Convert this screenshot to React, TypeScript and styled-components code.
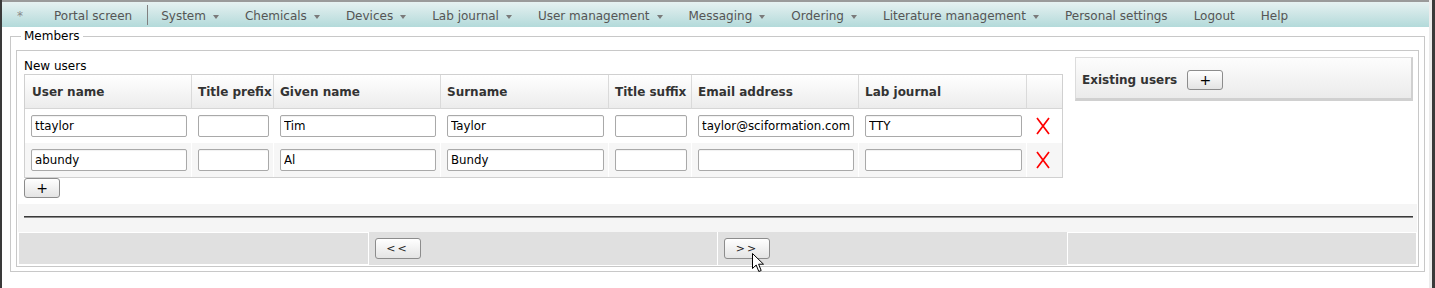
import React from "react";
import styled, { createGlobalStyle } from "styled-components";

const GlobalStyle = createGlobalStyle`
  body {
    margin: 0;
    background: #ffffff;
    font-family: "DejaVu Sans", Verdana, sans-serif;
    font-size: 12px;
    color: #000000;
  }
`;

interface NavEntry {
  label: string;
  menu?: boolean;
}

const navEntries: NavEntry[] = [
  { label: "System", menu: true },
  { label: "Chemicals", menu: true },
  { label: "Devices", menu: true },
  { label: "Lab journal", menu: true },
  { label: "User management", menu: true },
  { label: "Messaging", menu: true },
  { label: "Ordering", menu: true },
  { label: "Literature management", menu: true },
  { label: "Personal settings" },
  { label: "Logout" },
  { label: "Help" },
];

interface UserRow {
  user: string;
  prefix: string;
  given: string;
  surname: string;
  suffix: string;
  email: string;
  lab: string;
}

interface Column {
  title: string;
  width: number;
  field: keyof UserRow;
}

const columns: Column[] = [
  { title: "User name", width: 167, field: "user" },
  { title: "Title prefix", width: 82, field: "prefix" },
  { title: "Given name", width: 167, field: "given" },
  { title: "Surname", width: 168, field: "surname" },
  { title: "Title suffix", width: 83, field: "suffix" },
  { title: "Email address", width: 167, field: "email" },
  { title: "Lab journal", width: 168, field: "lab" },
];

const newUsers: UserRow[] = [
  {
    user: "ttaylor",
    prefix: "",
    given: "Tim",
    surname: "Taylor",
    suffix: "",
    email: "taylor@sciformation.com",
    lab: "TTY",
  },
  {
    user: "abundy",
    prefix: "",
    given: "Al",
    surname: "Bundy",
    suffix: "",
    email: "",
    lab: "",
  },
];

export default function App() {
  return (
    <Frame>
      <GlobalStyle />
      <Screen>
        <NavBar>
          <StarItem>*</StarItem>
          <NavItem $first>Portal screen</NavItem>
          <NavSeparator />
          {navEntries.map((entry) => (
            <NavItem key={entry.label}>
              {entry.label}
              {entry.menu && <MenuArrow />}
            </NavItem>
          ))}
        </NavBar>

        <Main>
          <Members>
            <MembersLegend>Members</MembersLegend>
            <Panel>
              <TopArea>
                <NewUsers>
                  <SectionLabel>New users</SectionLabel>
                  <UserTable>
                    <thead>
                      <tr>
                        {columns.map((col) => (
                          <HeadCell key={col.title} $w={col.width}>
                            {col.title}
                          </HeadCell>
                        ))}
                        <HeadCell $w={35} $last />
                      </tr>
                    </thead>
                    <tbody>
                      {newUsers.map((row, i) => (
                        <BodyRow key={row.user} $alt={i % 2 === 1}>
                          {columns.map((col) => (
                            <BodyCell key={col.title}>
                              <TextInput type="text" defaultValue={row[col.field]} />
                            </BodyCell>
                          ))}
                          <DeleteCell>
                            <DeleteIcon width="14" height="18" viewBox="0 0 14 18">
                              <path
                                d="M1 1 L13 17 M13 1 L1 17"
                                stroke="#ff0000"
                                strokeWidth="1.7"
                                fill="none"
                              />
                            </DeleteIcon>
                          </DeleteCell>
                        </BodyRow>
                      ))}
                    </tbody>
                  </UserTable>
                  <SmallButton>+</SmallButton>
                </NewUsers>

                <ExistingUsers>
                  <ExistingTitle>Existing users</ExistingTitle>
                  <SmallButton>+</SmallButton>
                </ExistingUsers>
              </TopArea>

              <RuleArea>
                <Rule />
              </RuleArea>

              <ButtonBar>
                <BarCell $framed />
                <BarCell>
                  <PageButton>&lt;&lt;</PageButton>
                </BarCell>
                <BarCell $divided>
                  <PageButton>&gt;&gt;</PageButton>
                  <Cursor width="13" height="20" viewBox="0 0 13 20">
                    <path
                      d="M0.5 0.5 L0.5 15.5 L4.2 12 L6.8 18.5 L9.2 17.5 L6.6 11.2 L11.5 11.2 Z"
                      fill="#ffffff"
                      stroke="#000000"
                      strokeWidth="1"
                      strokeLinejoin="round"
                    />
                  </Cursor>
                </BarCell>
                <BarCell $framed />
              </ButtonBar>
            </Panel>
          </Members>
        </Main>
      </Screen>
    </Frame>
  );
}

const Frame = styled.div`
  display: flex;
  min-height: 288px;
  border-left: 2px solid #3a3a3a;
  border-right: 3px solid #3a3a3a;
  box-sizing: border-box;
`;

const Screen = styled.div`
  flex: 1;
  display: flex;
  flex-direction: column;
  border-right: 3px solid #ececec;
`;

const NavBar = styled.div`
  display: flex;
  align-items: center;
  height: 23px;
  padding-top: 2px;
  border-top: 2px solid #9a9a9a;
  background: linear-gradient(to bottom, #e6f1f1 0%, #b3dada 100%);
  color: #555555;
  white-space: nowrap;
`;

const StarItem = styled.span`
  padding: 0 18px 0 15px;
  color: #8a8a8a;
  font-size: 12px;
`;

const NavItem = styled.span<{ $first?: boolean }>`
  display: flex;
  align-items: center;
  gap: 7px;
  padding: ${(p) => (p.$first ? "0 0 0 13px" : "0 13px")};
  font-size: 12px;
  line-height: 14px;
`;

const MenuArrow = styled.span`
  width: 0;
  height: 0;
  margin-top: 2px;
  border-left: 3.5px solid transparent;
  border-right: 3.5px solid transparent;
  border-top: 4px solid #7a7a7a;
`;

const NavSeparator = styled.span`
  width: 1px;
  height: 20px;
  margin: -2px 0 0 15px;
  background: #808080;
`;

const Main = styled.div`
  padding-top: 2px;
`;

const Members = styled.fieldset`
  margin: 0 4px 0 8px;
  padding: 7px 5px 4px 5px;
  border: 1px solid #c8c8c8;
  min-width: 0;
`;

const MembersLegend = styled.legend`
  margin-left: 5px;
  padding: 0 3px;
  font-size: 12px;
  line-height: 14px;
`;

const Panel = styled.div`
  border: 1px solid #c8c8c8;
  padding: 1px;
`;

const TopArea = styled.div`
  display: flex;
  align-items: flex-start;
  gap: 12px;
  padding: 5px 4px 6px 6px;
  background: #ffffff;
`;

const NewUsers = styled.div`
  display: flex;
  flex-direction: column;
  align-items: flex-start;
`;

const SectionLabel = styled.div`
  margin: 2px 0 1px;
  font-size: 12px;
  line-height: 14px;
`;

const UserTable = styled.table`
  width: 1039px;
  table-layout: fixed;
  border-collapse: separate;
  border-spacing: 0;
  border: 1px solid #d0d0d0;
`;

const HeadCell = styled.th<{ $w: number; $last?: boolean }>`
  box-sizing: border-box;
  width: ${(p) => p.$w}px;
  height: 34px;
  padding: 1px 0 0 6px;
  text-align: left;
  font-size: 12px;
  font-weight: bold;
  color: #333333;
  white-space: nowrap;
  background: linear-gradient(to bottom, #ffffff 0%, #ececec 100%);
  border-bottom: 1px solid #d6d6d6;
  border-right: ${(p) => (p.$last ? "none" : "1px solid #dadada")};

  &:first-child {
    padding-left: 7px;
  }
`;

const BodyRow = styled.tr<{ $alt: boolean }>`
  background: ${(p) => (p.$alt ? "#f6f6f6" : "#ffffff")};
`;

const BodyCell = styled.td`
  box-sizing: border-box;
  height: 34px;
  padding: 0 4px 0 6px;
  border-right: 1px solid #ffffff;
`;

const DeleteCell = styled.td`
  box-sizing: border-box;
  height: 34px;
  padding: 0 0 0 9px;
  vertical-align: middle;
`;

const DeleteIcon = styled.svg`
  display: block;
`;

const TextInput = styled.input`
  display: block;
  box-sizing: border-box;
  width: 100%;
  height: 22px;
  padding: 0 2px 0 3px;
  border: 1px solid #a9a9a9;
  border-radius: 2px;
  background: #ffffff;
  box-shadow: inset 0 1px 1px rgba(0, 0, 0, 0.06);
  font-family: "DejaVu Sans", Verdana, sans-serif;
  font-size: 11.8px;
  color: #000000;
  outline: none;
`;

const SmallButton = styled.button`
  box-sizing: border-box;
  width: 36px;
  height: 20px;
  padding: 0;
  border: 1px solid #8c8c8c;
  border-radius: 3px;
  background: linear-gradient(to bottom, #ffffff 0%, #e4e4e4 100%);
  font-family: "DejaVu Sans", Verdana, sans-serif;
  font-size: 14px;
  line-height: 16px;
  color: #000000;
`;

const ExistingUsers = styled.div`
  flex: 1;
  box-sizing: border-box;
  display: flex;
  align-items: center;
  gap: 10px;
  height: 44px;
  padding: 4px 6px 0;
  border: 1px solid #dcdcdc;
  border-right: 2px solid #d0d0d0;
  border-bottom: 3px solid #d0d0d0;
  background: linear-gradient(to bottom, #fdfdfd 0%, #ebebeb 100%);
`;

const ExistingTitle = styled.span`
  font-size: 12px;
  font-weight: bold;
  color: #333333;
`;

const RuleArea = styled.div`
  height: 28px;
  padding: 12px 4px 0 6px;
  box-sizing: border-box;
  background: #f5f5f5;
`;

const Rule = styled.div`
  border-top: 1px solid #3a3a3a;
  border-bottom: 1px solid #8a8a8a;
`;

const ButtonBar = styled.div`
  display: flex;
  height: 33px;
  background: #e0e0e0;
`;

const BarCell = styled.div<{ $framed?: boolean; $divided?: boolean }>`
  position: relative;
  flex: 1 1 0;
  box-sizing: border-box;
  display: flex;
  align-items: center;
  padding: 0 6px;
  border: ${(p) => (p.$framed ? "1px solid #ffffff" : "none")};
  border-left: ${(p) => (p.$framed || p.$divided ? "1px solid #ffffff" : "none")};
`;

const PageButton = styled.button`
  box-sizing: border-box;
  width: 46px;
  height: 21px;
  padding: 0;
  border: 1px solid #8c8c8c;
  border-radius: 3px;
  background: linear-gradient(to bottom, #ffffff 0%, #e4e4e4 100%);
  font-family: "DejaVu Sans", Verdana, sans-serif;
  font-size: 11px;
  letter-spacing: 2px;
  color: #222222;
`;

const Cursor = styled.svg`
  position: absolute;
  left: 34px;
  top: 21px;
`;
